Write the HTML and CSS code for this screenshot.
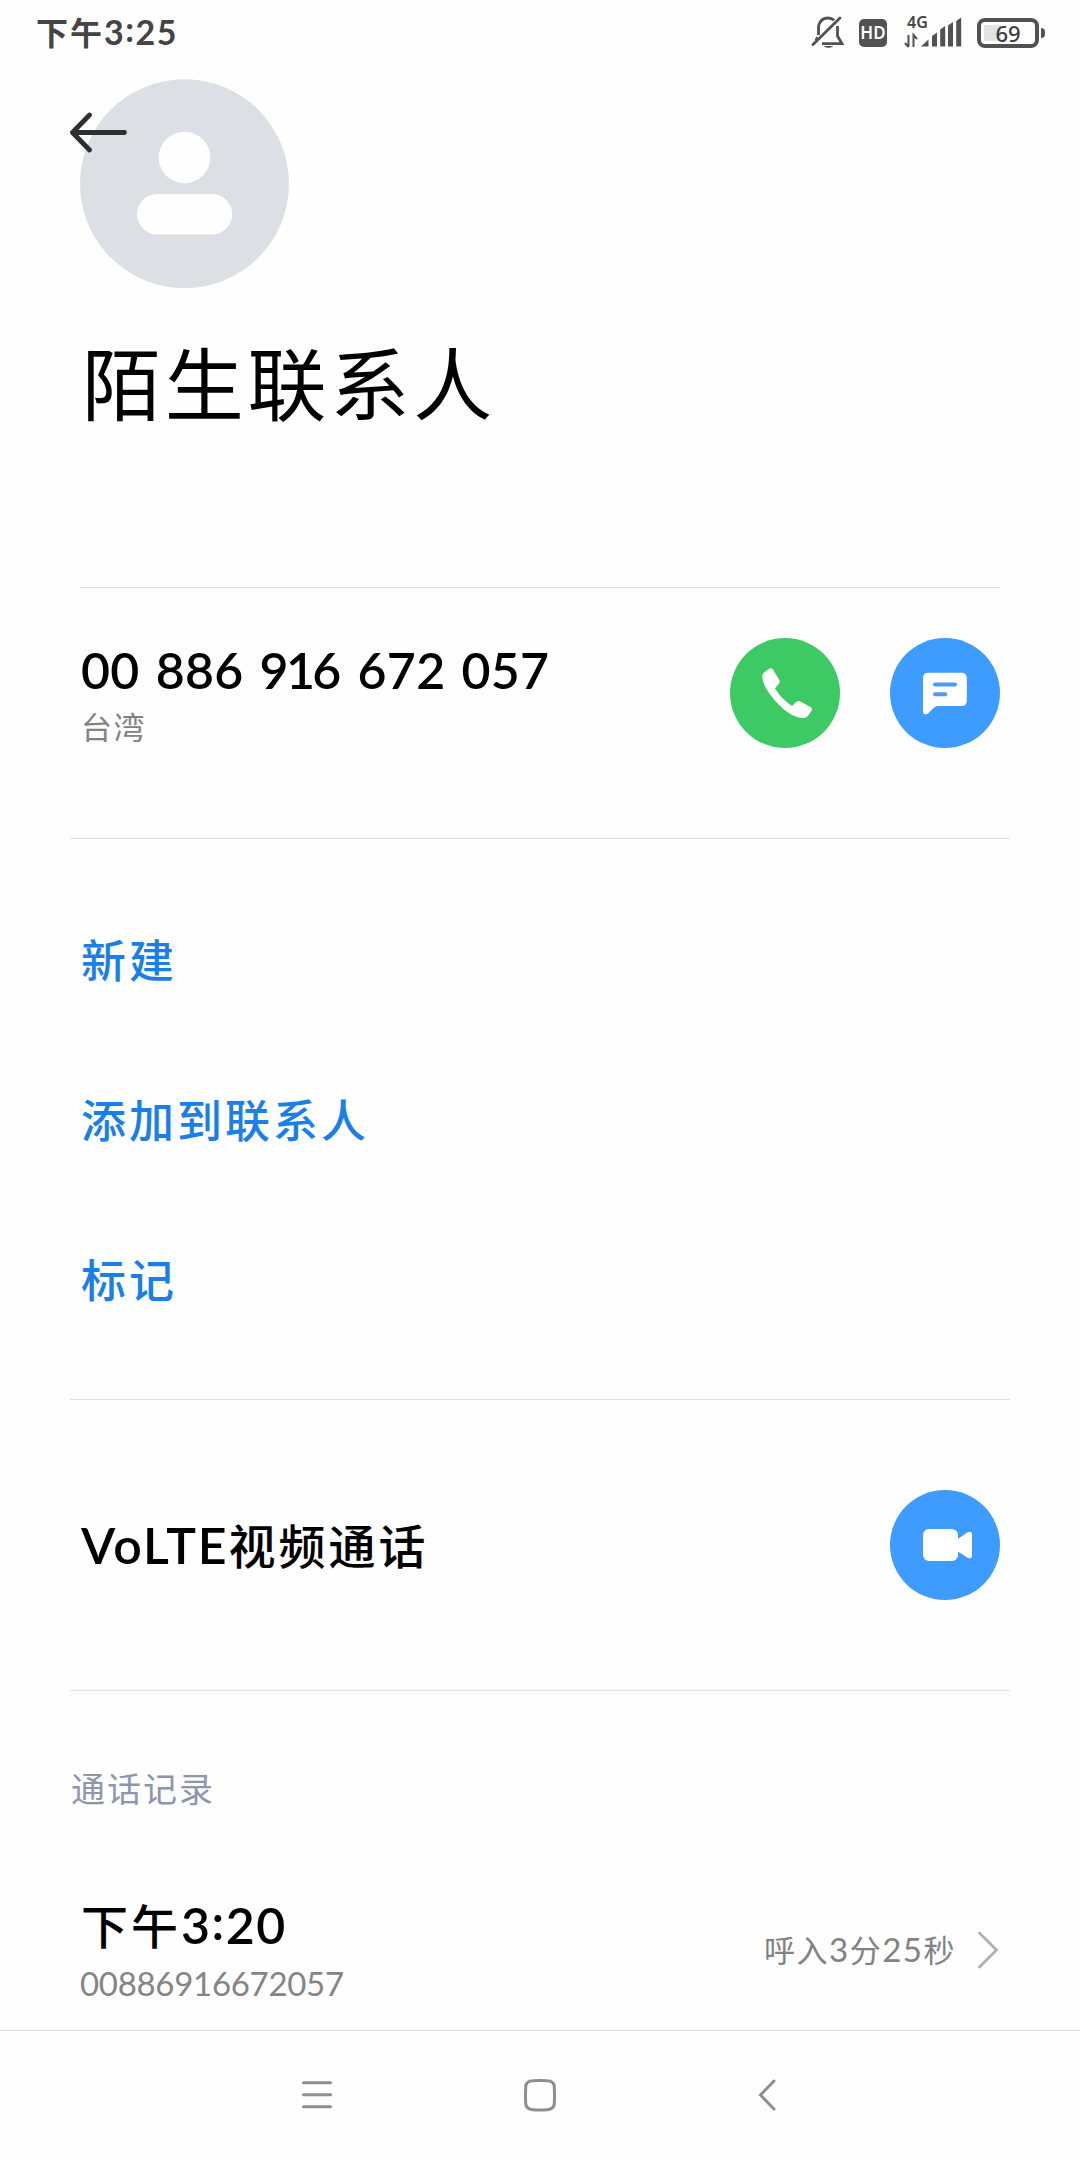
FILE: index.html
```html
<!DOCTYPE html>
<html lang="zh-CN">
<head>
<meta charset="utf-8">
<title>陌生联系人</title>
<link rel="stylesheet" href="styles.css">
</head>
<body>
<div class="screen">
  <header class="status">
    <div class="status-time">下午<span class="num">3<span class="colon">:</span>25</span></div>
    <div class="status-icons">
      <svg class="ic-mute" width="34" height="36" viewBox="0 0 34 36" fill="none" stroke="#525252" stroke-width="2.8">
        <path d="M7.500 20V13C7.500 7 11.500 3 17 3c2.600 0 4.600.8 6.200 2.300M26.500 11v10l4.500 7.700H11M6.500 22.500l-1.500 3"/>
        <path d="M2 29.500L29 3" stroke-linecap="round"/>
        <path d="M13 31h9c-1 2.400-8 2.400-9 0z" fill="#525252" stroke="none"/>
      </svg>
      <span class="hd">HD</span>
      <div class="signal">
        <span class="net">4G</span>
        <svg width="58" height="32" viewBox="0 0 58 32" fill="#525252">
          <path d="M4.500 18v12M1 26l3.500 4M9.500 30V18l3.500 4" fill="none" stroke="#525252" stroke-width="2"/>
          <path d="M17 29.500l7.500-7v7zM28 29.500V19l5-3.500v14zM36.200 29.500v-17l5-3.500v20.500zM44 29.500V8.500L49 5v24.500zM52.200 29.500V4l5-3.500v29z"/>
        </svg>
      </div>
      <div class="battery"><span class="battery-box">69</span><span class="battery-tip"></span></div>
    </div>
  </header>

  <section class="profile">
    <svg class="avatar" width="210" height="210" viewBox="0 0 210 210">
      <circle cx="104.500" cy="104.700" r="104.500" fill="#dcdfe4"/>
      <circle cx="104.500" cy="78.500" r="25.800" fill="#fefefe"/>
      <rect x="57" y="115" width="95.300" height="40.500" rx="20.250" fill="#fefefe"/>
    </svg>
    <svg class="back" width="60" height="42" viewBox="0 0 60 42" fill="none" stroke="#2e302f" stroke-width="4.800" stroke-linecap="round" stroke-linejoin="round">
      <path d="M54.500 21.500H3M19.500 4L2.500 21.500l17 17.500"/>
    </svg>
    <h1 class="name">陌生联系人</h1>
  </section>

  <section class="phone">
    <div class="phone-text">
      <div class="phone-number num">00 886 9<span class="one">1</span>6 672 057</div>
      <div class="phone-place">台湾</div>
    </div>
    <div class="buttons">
      <div class="round green">
        <svg width="110" height="110" viewBox="0 0 110 110" fill="#fff">
          <path d="M34 34.500l5.500-4q2.200-1 3.500 1l6.500 11q.8 1.500-.3 2.700L45 50.500Q52 61.500 62 68l4.500-4.300q1.600-1.300 3.300-.5L80.500 69q2.200 1.300 1.200 3.500L78 78q-2 2-5 2Q60 80 44 61.500 32.500 48 32.300 38.500 32.200 36 34 34.500z"/>
        </svg>
      </div>
      <div class="round blue">
        <svg width="110" height="110" viewBox="0 0 110 110">
          <path fill="#fff" d="M38.500 34.700h33q5.300 0 5.300 5.500v22.300q0 5.500-5.500 5.500H48q-2.500 0-4.200 1.700l-5.800 5.800q-1.200 1.200-2.700 1-2.300-.2-2.300-2.500V40q0-5.300 5.500-5.300z"/>
          <path d="M45 46.500h20M45 56.300h10.300" stroke="#4c9cf0" stroke-width="4" stroke-linecap="round"/>
        </svg>
      </div>
    </div>
  </section>

  <nav class="actions">
    <a class="action">新建</a>
    <a class="action">添加到联系人</a>
    <a class="action">标记</a>
  </nav>

  <section class="volte">
    <div class="volte-label"><span class="latin">VoLTE</span>视频通话</div>
    <div class="round blue">
      <svg width="110" height="110" viewBox="0 0 110 110" fill="#fff">
        <rect x="33" y="39" width="35" height="32" rx="6"/>
        <path d="M67 49.500l10.700-7.200q4-1.800 4.300 1.500v22.500q-.3 3.300-4.300 1.500L67 61z"/>
      </svg>
    </div>
  </section>

  <section class="log">
    <h2 class="log-title">通话记录</h2>
    <div class="record">
      <div class="record-main">
        <div class="record-time">下午<span class="num">3<span class="colon">:</span>20</span></div>
        <div class="record-number num">00886916672057</div>
      </div>
      <div class="record-side">
        <div class="record-info">呼入<span class="num">3</span>分<span class="num">25</span>秒</div>
        <svg width="22" height="40" viewBox="0 0 22 40" fill="none" stroke="#b0b0b0" stroke-width="2.800" stroke-linecap="round"><path d="M1.500 3l17 17-17 17"/></svg>
      </div>
    </div>
  </section>

  <footer class="navbar">
    <svg width="1080" height="129" viewBox="0 0 1080 129" fill="none" stroke="#8e8e8e" stroke-width="3" stroke-linecap="round">
      <path d="M303.500 51.700h27M303.500 63.700h27M303.500 75.700h27"/>
      <path d="M533 49.700q7-.6 14 0 7 .2 7.300 6 .5 8.500 0 17-.3 5.500-7.300 6-7 .6-14 0-7-.5-7.300-6-.5-8.500 0-17 .3-5.800 7.300-6z"/>
      <path d="M774 50L760.500 64l13.500 14"/>
    </svg>
  </footer>
</div>
</body>
</html>
```
FILE: styles.css
```css
* { box-sizing: border-box; }
body {
  margin: 0;
  background: #fefefe;
  font-family: "Noto Sans CJK SC", sans-serif;
  color: #000;
}
.screen {
  width: 1080px;
  height: 2160px;
  display: flex;
  flex-direction: column;
  overflow: hidden;
}
.num, .latin { font-family: Lato, sans-serif; }
h1, h2 { margin: 0; }

/* status bar */
.status {
  height: 79px;
  padding: 0 35px 0 36px;
  display: flex;
  justify-content: space-between;
}
.status-time {
  height: 63px;
  line-height: 63px;
  font-size: 32px;
  font-weight: 700;
  letter-spacing: 2px;
  color: #444;
  white-space: nowrap;
}
.status-time .num { font-size: 34px; letter-spacing: 1.5px; }
.status-time .colon, .record-time .colon { vertical-align: 0.08em; line-height: 1; }
.status-icons {
  height: 66px;
  display: flex;
  align-items: center;
}
.hd {
  width: 28px;
  height: 28px;
  margin-left: 14px;
  border-radius: 5px;
  background: #525252;
  color: #fff;
  font: 600 17px/28px "Noto Sans", sans-serif;
  text-align: center;
}
.signal {
  position: relative;
  width: 58px;
  height: 32px;
  margin: 0 15px 0 17px;
}
.net {
  position: absolute;
  left: 3px;
  top: -4px;
  font: 600 16px/18px "Noto Sans", sans-serif;
  color: #444;
}
.signal svg { display: block; }
.battery { display: flex; align-items: center; gap: 2px; }
.battery-box {
  width: 62px;
  height: 30px;
  border: 4px solid #525252;
  border-radius: 8px;
  background: linear-gradient(#e3e3e3, #e3e3e3) no-repeat 3px 3px / 17px 16px;
  font: 500 22px/23px "Noto Sans", sans-serif;
  text-align: center;
  color: #3c3c3c;
}
.battery-tip { width: 4px; height: 10px; border-radius: 0 4px 4px 0; background: #525252; }

/* profile */
.profile {
  position: relative;
  height: 508px;
  padding: 0 80px;
}
.avatar { display: block; }
.back { position: absolute; left: 70px; top: 32px; }
.name {
  margin: 32px 0 0 2px;
  line-height: 120px;
  font-size: 79px;
  font-weight: 400;
  letter-spacing: 3.8px;
}

/* phone */
.phone {
  height: 251px;
  margin: 0 80px;
  padding-top: 50px;
  border-top: 1px solid #e2e2e2;
  display: flex;
  justify-content: space-between;
}
.phone-text { padding: 2px 0 0 1px; }
.phone-number {
  font-size: 50px;
  font-weight: 600;
  line-height: 60px;
  letter-spacing: 0.3px;
  word-spacing: 3.3px;
  white-space: nowrap;
}
.one { margin: 0 -3px; }
.phone-place {
  margin-top: 4px;
  font-size: 31px;
  line-height: 44px;
  letter-spacing: 1.5px;
  color: #828282;
}
.buttons { display: flex; gap: 50px; }
.round { width: 110px; height: 110px; border-radius: 50%; }
.round svg { display: block; }
.green { background: #3dc963; }
.blue { background: #3e9bff; }

/* actions */
.actions {
  height: 562px;
  margin: 0 70px;
  padding: 40px 11px 0;
  border-top: 1px solid #e2e2e2;
}
.action {
  display: block;
  height: 160px;
  line-height: 160px;
  font-size: 45px;
  font-weight: 500;
  letter-spacing: 3px;
  color: #1a80e8;
}

/* volte */
.volte {
  height: 292px;
  margin: 0 70px;
  padding: 0 10px;
  border-top: 1px solid #e2e2e2;
  border-bottom: 1px solid #e2e2e2;
  display: flex;
  align-items: center;
  justify-content: space-between;
}
.volte-label {
  padding: 0 0 3px 1px;
  font-size: 47px;
  font-weight: 500;
  letter-spacing: 3px;
}
.latin { font-size: 50px; font-weight: 600; letter-spacing: 1.900px; }

/* call log */
.log { height: 339px; padding: 72px 80px 0 71px; }
.log-title {
  line-height: 50px;
  font-size: 34px;
  font-weight: 400;
  letter-spacing: 2px;
  color: #8e95ae;
}
.record {
  margin-top: 77px;
  padding-left: 9px;
  display: flex;
  justify-content: space-between;
}
.record-time {
  height: 68px;
  padding-left: 1px;
  line-height: 68px;
  font-size: 47px;
  font-weight: 500;
  letter-spacing: 3px;
}
.record-time .num { font-size: 50px; font-weight: 600; letter-spacing: 1.500px; }
.record-number {
  margin-top: 5px;
  font-size: 33px;
  line-height: 40px;
  letter-spacing: -0.300px;
  color: #858585;
}
.record-side { height: 119px; display: flex; align-items: center; gap: 22px; }
.record-info { padding-bottom: 3px; font-size: 31px; letter-spacing: 1.500px; color: #828282; }
.record-info .num { font-size: 33px; }

/* navigation */
.navbar { height: 130px; border-top: 1px solid #e2e2e2; }
.navbar svg { display: block; }
```
